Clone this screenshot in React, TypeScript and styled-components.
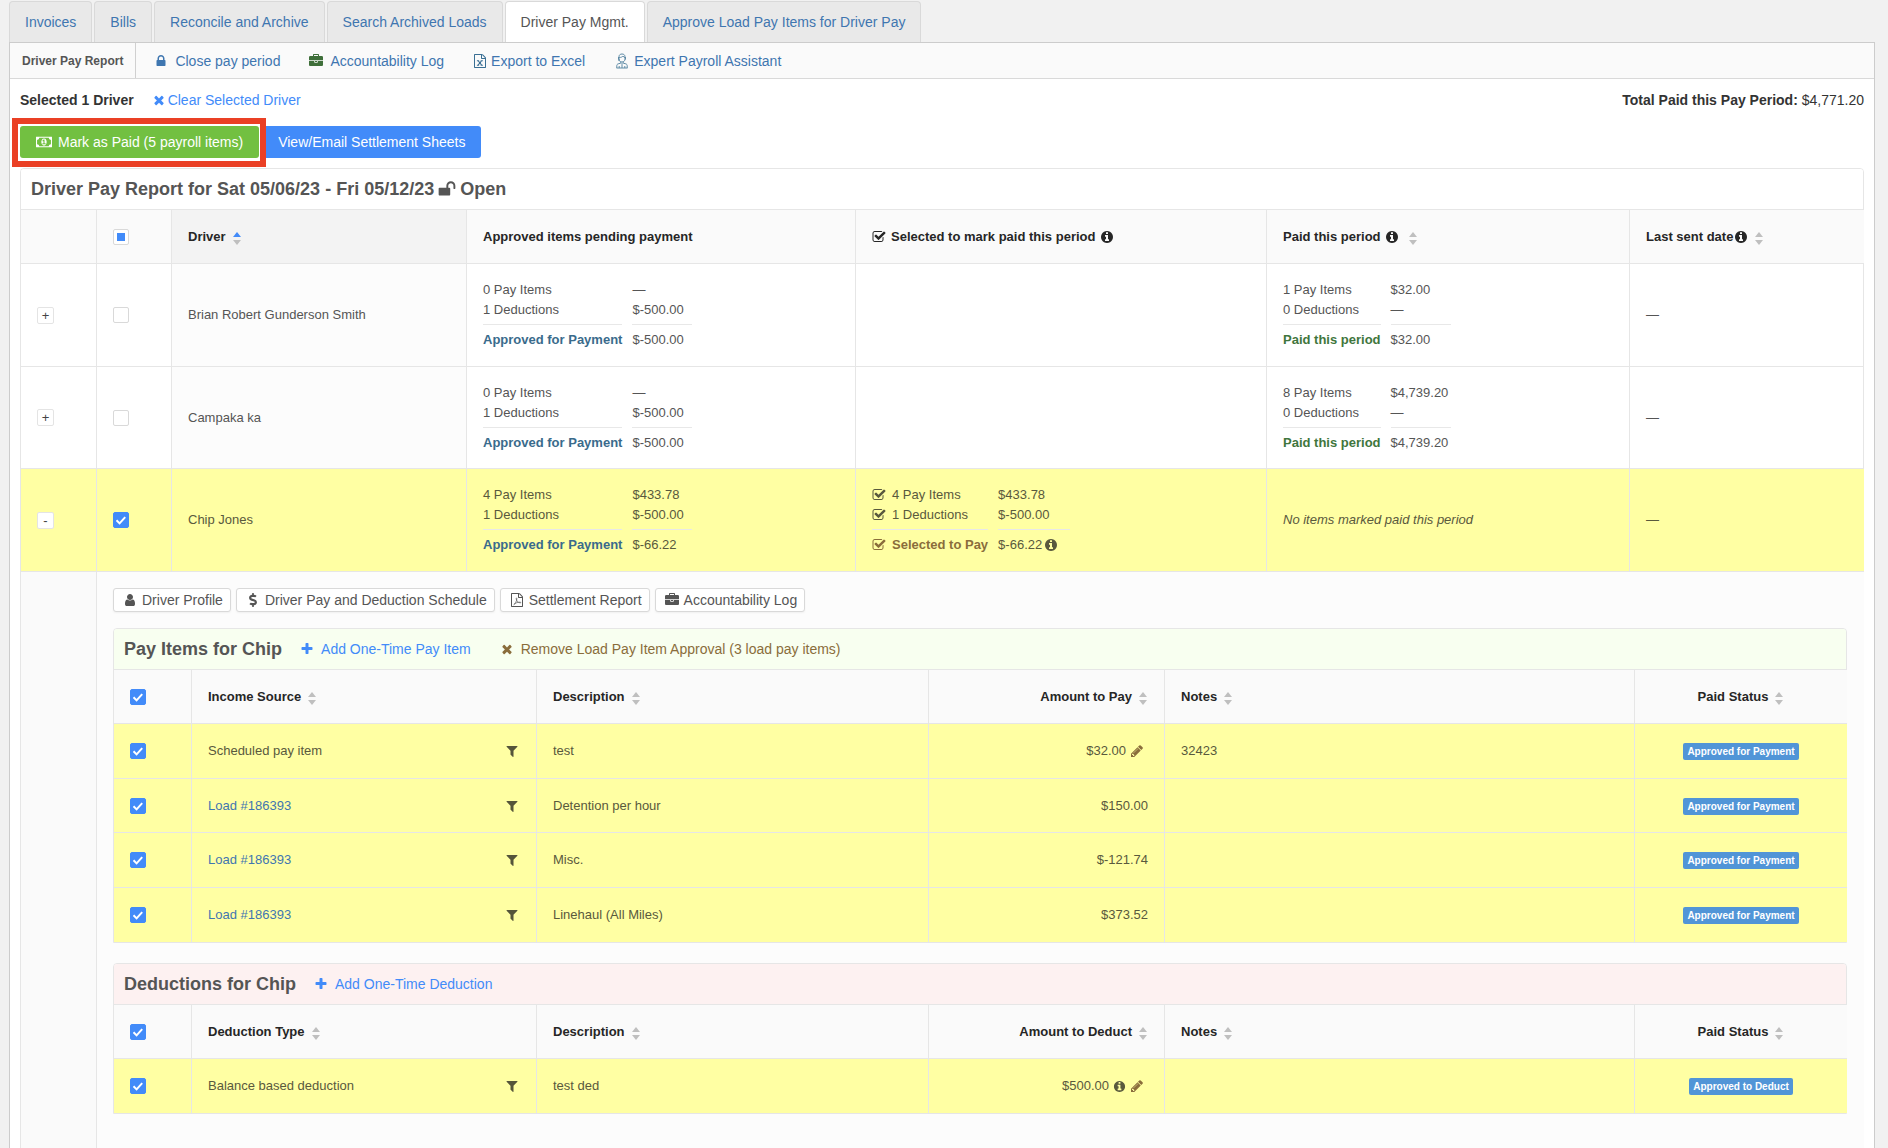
import React, { useEffect, useRef } from "react";
import styled, { createGlobalStyle, css } from "styled-components";
import { FaDollarSign } from "react-icons/fa";

const GlobalStyle = createGlobalStyle`
  * { box-sizing: border-box; }
  body {
    margin: 0;
    background: #f1f1f1;
    color: #333;
    font-family: "Liberation Sans", Arial, Helvetica, sans-serif;
    font-size: 14px;
    line-height: 20px;
  }
  button, input { font-family: inherit; }
  a { color: #3f76b0; text-decoration: none; }
`;

const blue = "#428bf9";
const line = "#e6e6e6";
const brown = "#8a6d3b";

/* ---------- icons ---------- */

const glyphs = {
  checkSquare:
    "M1472 930v318q0 119-84.5 203.5t-203.5 84.5h-832q-119 0-203.5-84.5t-84.5-203.5v-832q0-119 84.5-203.5t203.5-84.5h832q63 0 117 25 15 7 18 23 3 17-9 29l-49 49q-10 10-23 10-3 0-9-2-23-6-45-6h-832q-66 0-113 47t-47 113v832q0 66 47 113t113 47h832q66 0 113-47t47-113v-254q0-13 9-22l64-64q10-10 23-10 6 0 12 3 20 8 20 29zm231-489l-814 814q-24 24-57 24t-57-24l-430-430q-24-24-24-57t24-57l110-110q24-24 57-24t57 24l263 263 647-647q24-24 57-24t57 24l110 110q24 24 24 57t-24 57z",
  info: "M1152 1376v-160q0-14-9-23t-23-9h-96v-512q0-14-9-23t-23-9h-320q-14 0-23 9t-9 23v160q0 14 9 23t23 9h96v320h-96q-14 0-23 9t-9 23v160q0 14 9 23t23 9h448q14 0 23-9t9-23zm-128-896v-160q0-14-9-23t-23-9h-192q-14 0-23 9t-9 23v160q0 14 9 23t23 9h192q14 0 23-9t9-23zm640 416q0 209-103 385.5t-279.5 279.5-385.5 103-385.5-103-279.5-279.5-103-385.5 103-385.5 279.5-279.5 385.5-103 385.5 103 279.5 279.5 103 385.5z",
  lock: "M640 768h512v-192q0-106-75-181t-181-75-181 75-75 181v192zm832 96v576q0 40-28 68t-68 28h-960q-40 0-68-28t-28-68v-576q0-40 28-68t68-28h32v-192q0-184 132-316t316-132 316 132 132 316v192h32q40 0 68 28t28 68z",
  unlock:
    "M1728 576v256q0 26-19 45t-45 19h-64q-26 0-45-19t-19-45v-256q0-106-75-181t-181-75-181 75-75 181v192h96q40 0 68 28t28 68v576q0 40-28 68t-68 28h-960q-40 0-68-28t-28-68v-576q0-40 28-68t68-28h672v-192q0-185 131.5-316.5t316.5-131.5 316.5 131.5 131.5 316.5z",
  briefcase:
    "M640 256h512v-128h-512v128zm1152 640v480q0 66-47 113t-113 47h-1472q-66 0-113-47t-47-113v-480h672v160q0 26 19 45t45 19h320q26 0 45-19t19-45v-160h672zm-768 0v128h-256v-128h256zm768-480v384h-1792v-384q0-66 47-113t113-47h352v-160q0-40 28-68t68-28h576q40 0 68 28t28 68v160h352q66 0 113 47t47 113z",
  times:
    "M1490 1322q0 40-28 68l-136 136q-28 28-68 28t-68-28l-294-294-294 294q-28 28-68 28t-68-28l-136-136q-28-28-28-68t28-68l294-294-294-294q-28-28-28-68t28-68l136-136q28-28 68-28t68 28l294 294 294-294q28-28 68-28t68 28l136 136q28 28 28 68t-28 68l-294 294 294 294q28 28 28 68z",
  plus: "M1600 736v192q0 40-28 68t-68 28h-416v416q0 40-28 68t-68 28h-192q-40 0-68-28t-28-68v-416h-416q-40 0-68-28t-28-68v-192q0-40 28-68t68-28h416v-416q0-40 28-68t68-28h192q40 0 68 28t28 68v416h416q40 0 68 28t28 68z",
  filter:
    "M1595 295q17 41-14 70l-493 493v742q0 42-39 59-13 5-25 5-27 0-45-19l-256-256q-19-19-19-45v-486l-493-493q-31-29-14-70 17-39 59-39h1280q42 0 59 39z",
  user: "M1536 1399q0 109-62.5 187t-150.5 78h-854q-88 0-150.5-78t-62.5-187q0-85 8.5-160.5t31.5-152 58.5-131 94-89 134.5-34.5q131 128 313 128t313-128q76 0 134.5 34.5t94 89 58.5 131 31.5 152 8.5 160.5zm-256-887q0 159-112.5 271.5t-271.5 112.5-271.5-112.5-112.5-271.5 112.5-271.5 271.5-112.5 271.5 112.5 112.5 271.5z",
  pencil:
    "M491 1536l91-91-235-235-91 91v107h128v128h107zm523-928q0-22-22-22-10 0-17 7l-542 542q-7 7-7 17 0 22 22 22 10 0 17-7l542-542q7-7 7-17zm-54-192l416 416-832 832h-416v-416zm683 96q0 53-37 90l-166 166-416-416 166-165q36-38 90-38 53 0 91 38l235 234q37 39 37 91z",
  money:
    "M704 1152h384v-96h-128v-448h-114l-148 137 77 80q42-37 55-57h2v288h-128v96zm512-256q0 70-21 142t-59.5 134-101.5 101-138 39-138-39-101.5-101-59.5-134-21-142 21-142 59.5-134 101.5-101 138-39 138 39 101.5 101 59.5 134 21 142zm512 256v-512q-106 0-181-75t-75-181h-1152q0 106-75 181t-181 75v512q106 0 181 75t75 181h1152q0-106 75-181t181-75zm128-832v1152q0 26-19 45t-45 19h-1792q-26 0-45-19t-19-45v-1152q0-26 19-45t45-19h1792q26 0 45 19t19 45z",
};

const filePage =
  "M1596 380q28 28 48 76t20 88v1152q0 40-28 68t-68 28h-1344q-40 0-68-28t-28-68v-1600q0-40 28-68t68-28h896q40 0 88 20t76 48zm-444-244v376h376q-10-29-22-41l-313-313q-12-12-41-22zm384 1528v-1024h-416q-40 0-68-28t-28-68v-416h-768v1536h1280z";

const Svg = styled.svg<{ $size: number; $color?: string }>`
  flex: none;
  width: ${(p) => p.$size}px;
  height: ${(p) => p.$size}px;
  color: ${(p) => p.$color || "inherit"};
  fill: currentColor;
  vertical-align: middle;
`;

function Icon({ name, size = 14, color }: { name: keyof typeof glyphs; size?: number; color?: string }) {
  return (
    <Svg $size={size} $color={color} viewBox={name === "money" ? "-64 0 1920 1792" : "0 0 1792 1792"} aria-hidden="true">
      <path d={glyphs[name]} />
    </Svg>
  );
}

function ExcelIcon() {
  return (
    <Svg $size={14} $color="#3a6f94" viewBox="0 0 1792 1792" aria-hidden="true">
      <path d={filePage} />
      <path
        d="M500 850h280M980 850h280M500 1440h280M980 1440h280M650 850L1110 1430M1110 850L650 1430"
        fill="none"
        stroke="currentColor"
        strokeWidth="130"
      />
    </Svg>
  );
}

function PdfIcon() {
  return (
    <Svg $size={14} viewBox="0 0 1792 1792" aria-hidden="true">
      <path d={filePage} />
      <path
        d="M480 1490c160-60 400-470 400-790 0-90-90-90-90 0 0 260 220 560 520 560 130 0 110-90-30-90-260 0-640 110-800 320z"
        fill="none"
        stroke="currentColor"
        strokeWidth="85"
      />
    </Svg>
  );
}

function AssistantIcon() {
  return (
    <Svg $size={16} $color="#5f8ba6" viewBox="-2 0 16 16" aria-hidden="true">
      <g fill="none" stroke="currentColor" strokeWidth="1">
        <path d="M3 8V3.8C3 2 4.2 1 6 1s3 1 3 2.8V6c0 1.8-1.2 3-3 3S3 8 3 6M2.5 4v2.5M9.5 4v2.5M3.2 4.5C5 4.5 6.2 4 7 3c.4.8 1 1.3 2 1.5" />
        <path d="M4.8 8.8v1.4L6 11.500l1.200-1.300V8.800M.8 15v-2.500c0-1.300 1.200-1.800 3.600-2.200M11.200 15v-2.500c0-1.300-1.200-1.800-3.600-2.200M.5 15h11M3.200 15v-2M8.800 15v-2M6 12v3" />
      </g>
    </Svg>
  );
}

/* ---------- page frame ---------- */

const Page = styled.div`
  height: 100vh;
  overflow: hidden;
  padding: 1px 13px 0 9px;
`;

const Tabs = styled.nav`
  display: flex;
  gap: 2px;
`;

const Tab = styled.a<{ $active?: boolean }>`
  height: 41px;
  padding: 10px 15px;
  border: 1px solid #d9d9d9;
  border-bottom: 0;
  border-radius: 4px 4px 0 0;
  background: ${(p) => (p.$active ? "#fff" : "#e9e9e9")};
  ${(p) => p.$active && css`color: #555;`}
`;

const Frame = styled.main`
  min-height: 100vh;
  border: 1px solid #ccc;
  background: #fff;
`;

const Toolbar = styled.div`
  display: flex;
  align-items: stretch;
  height: 36px;
  border-bottom: 1px solid #d9d9d9;
  background: #fafafa;
`;

const ToolbarTitle = styled.strong`
  display: flex;
  align-items: center;
  padding: 0 12px;
  border-right: 1px solid #d0d0d0;
  color: #555;
  font-size: 12px;
`;

const ToolbarLinks = styled.div`
  display: flex;
  align-items: center;
  gap: 29px;
  padding-left: 18px;
`;

const IconLink = styled.a<{ $color?: string; $gap?: number }>`
  display: inline-flex;
  align-items: center;
  gap: ${(p) => p.$gap || 7}px;
  ${(p) => p.$color && css`color: ${p.$color};`}
`;

const Content = styled.div`
  padding: 11px 10px 0;
`;

const Summary = styled.div`
  display: flex;
  align-items: center;
  gap: 18px;
`;

const Total = styled.span`
  margin-left: auto;
`;

const Actions = styled.div`
  display: flex;
  gap: 3px;
  padding: 16px 0 10px;
`;

const ActionButton = styled.button<{ $bg: string }>`
  display: flex;
  align-items: center;
  gap: 6px;
  height: 32px;
  padding: 0 16px;
  border: 0;
  border-radius: 3px;
  background: ${(p) => p.$bg};
  color: #fff;
  font-size: 14px;
`;

const Marked = styled.div`
  position: relative;
  &::after {
    content: "";
    position: absolute;
    inset: -8px -7px -9px -8px;
    border: 6px solid #ea4025;
    pointer-events: none;
  }
`;

/* ---------- cards and tables ---------- */

const Card = styled.section`
  border: 1px solid ${line};
  border-radius: 4px 4px 0 0;
  & + & { margin-top: 20px; }
`;

const CardHead = styled.header<{ $bg?: string }>`
  display: flex;
  align-items: center;
  height: 41px;
  padding: 0 10px;
  gap: 18px;
  border-bottom: 1px solid ${line};
  border-radius: 3px 3px 0 0;
  background: ${(p) => p.$bg || "#fff"};
`;

const HeadLinks = styled.div`
  display: flex;
  gap: 29px;
`;

const Title = styled.h2`
  display: flex;
  align-items: center;
  gap: 4px;
  margin: 0;
  color: #555;
  font-size: 18px;
  font-weight: 700;
`;

const Table = styled.table`
  width: 100%;
  table-layout: fixed;
  border-collapse: separate;
  border-spacing: 0;
  font-size: 13px;
  color: #555;
`;

const Col = styled.col<{ $w: number }>`
  width: ${(p) => p.$w}px;
`;

type Align = "left" | "right" | "center";

const Th = styled.th<{ $align?: Align; $sorted?: boolean }>`
  height: 54px;
  padding: 0 16px;
  border-right: 1px solid ${line};
  border-bottom: 1px solid ${line};
  background: ${(p) => (p.$sorted ? "#f3f3f3" : "#fafafa")};
  color: #262626;
  text-align: ${(p) => p.$align || "left"};
  font-weight: 700;
  &:last-child { border-right: 0; }
`;

const Td = styled.td<{ $align?: Align; $bg?: string }>`
  padding: 0 16px;
  border-right: 1px solid ${line};
  border-bottom: 1px solid ${line};
  background: ${(p) => p.$bg || "transparent"};
  text-align: ${(p) => p.$align || "left"};
  &:last-child { border-right: 0; }
`;

const DriverRow = styled.tr<{ $selected?: boolean }>`
  height: 103px;
  &:nth-child(even) { height: 102px; }
  ${(p) => p.$selected && css`background: #ffffa3; color: #59593d;`}
`;

const ItemRow = styled.tr`
  height: 55px;
  background: #ffffa3;
  color: #59593d;
  &:nth-child(even), &:last-child { height: 54px; }
  &:last-child td { border-bottom: 0; }
`;

const SorterBox = styled.span`
  display: inline-flex;
  flex-direction: column;
  gap: 3px;
  margin: 3px 1px 0 3px;
`;

const HeadLabel = styled.span<{ $gap?: number }>`
  display: inline-flex;
  align-items: center;
  gap: ${(p) => p.$gap || 4}px;
  height: 20px;
  vertical-align: middle;
  svg + ${SorterBox} { margin-left: 6px; }
`;

const Caret = styled.i<{ $down?: boolean; $on?: boolean }>`
  border: 4px solid transparent;
  border-top-width: ${(p) => (p.$down ? 5 : 0)}px;
  border-bottom-width: ${(p) => (p.$down ? 0 : 5)}px;
  ${(p) =>
    p.$down
      ? css`border-top-color: #bfbfbf;`
      : css`border-bottom-color: ${p.$on ? blue : "#bfbfbf"};`}
`;

function Sorter({ on }: { on?: boolean }) {
  return (
    <SorterBox>
      <Caret $on={on} />
      <Caret $down />
    </SorterBox>
  );
}

const Box = styled.input`
  appearance: none;
  display: block;
  width: 16px;
  height: 16px;
  margin: 0;
  border: 1px solid #d9d9d9;
  border-radius: 2px;
  background: #fff center / 16px 16px no-repeat;
  &:checked {
    border-color: ${blue};
    background-color: ${blue};
    background-image: url("data:image/svg+xml,%3Csvg xmlns='http://www.w3.org/2000/svg' viewBox='0 0 16 16'%3E%3Cpath d='M3.5 8.2l3.1 3.2 5.6-6.2' fill='none' stroke='white' stroke-width='2'/%3E%3C/svg%3E");
  }
  &:indeterminate {
    background-image: linear-gradient(${blue}, ${blue});
    background-size: 8px 8px;
  }
`;

function Check({ label, checked, partial }: { label: string; checked?: boolean; partial?: boolean }) {
  const ref = useRef<HTMLInputElement>(null);
  useEffect(() => {
    if (ref.current) ref.current.indeterminate = !!partial;
  }, [partial]);
  return <Box ref={ref} type="checkbox" aria-label={label} defaultChecked={checked} />;
}

const Toggle = styled.button`
  display: flex;
  align-items: center;
  justify-content: center;
  width: 17px;
  height: 17px;
  padding: 0;
  border: 1px solid #e4e4e4;
  border-radius: 2px;
  background: #fff;
  color: #444;
  font-size: 13px;
  line-height: 15px;
`;

const Sums = styled.dl<{ $min: number }>`
  display: inline-grid;
  grid-template-columns: auto minmax(${(p) => p.$min}px, auto);
  column-gap: 10px;
  margin: 0;
  vertical-align: middle;
  line-height: 20px;
`;

const SumLabel = styled.dt<{ $total?: string }>`
  display: flex;
  align-items: center;
  gap: 6px;
  ${(p) =>
    p.$total &&
    css`
      margin-top: 4px;
      padding-top: 5px;
      border-top: 1px solid #e8e8e8;
      color: ${p.$total};
      font-weight: 700;
    `}
`;

const SumValue = styled.dd<{ $total?: boolean }>`
  display: flex;
  align-items: center;
  gap: 2px;
  margin: 0;
  ${(p) => p.$total && css`margin-top: 4px; padding-top: 5px; border-top: 1px solid #e8e8e8;`}
`;

interface SumData {
  pay: [string, string];
  ded: [string, string];
  total: string;
}

function SumsCell({ data, label, color, ticks }: { data: SumData; label: string; color: string; ticks?: boolean }) {
  const tick = ticks ? <Icon name="checkSquare" /> : null;
  return (
    <Sums $min={ticks ? 72 : 60}>
      <SumLabel>{tick}{data.pay[0]} Pay Items</SumLabel>
      <SumValue>{data.pay[1]}</SumValue>
      <SumLabel>{tick}{data.ded[0]} Deductions</SumLabel>
      <SumValue>{data.ded[1]}</SumValue>
      <SumLabel $total={color}>{tick}{label}</SumLabel>
      <SumValue $total>{data.total}{ticks && <Icon name="info" />}</SumValue>
    </Sums>
  );
}

interface Driver {
  name: string;
  approved: SumData;
  selected?: SumData;
  paid?: SumData;
}

const drivers: Driver[] = [
  {
    name: "Brian Robert Gunderson Smith",
    approved: { pay: ["0", "—"], ded: ["1", "$-500.00"], total: "$-500.00" },
    paid: { pay: ["1", "$32.00"], ded: ["0", "—"], total: "$32.00" },
  },
  {
    name: "Campaka ka",
    approved: { pay: ["0", "—"], ded: ["1", "$-500.00"], total: "$-500.00" },
    paid: { pay: ["8", "$4,739.20"], ded: ["0", "—"], total: "$4,739.20" },
  },
  {
    name: "Chip Jones",
    approved: { pay: ["4", "$433.78"], ded: ["1", "$-500.00"], total: "$-66.22" },
    selected: { pay: ["4", "$433.78"], ded: ["1", "$-500.00"], total: "$-66.22" },
  },
];

/* ---------- driver detail ---------- */

const DetailGutter = styled.td`
  border-right: 1px solid ${line};
  background: #fafafa;
`;

const Detail = styled.td`
  height: 640px;
  padding: 16px 17px 0 16px;
  background: #fcfcfc;
  vertical-align: top;
  font-size: 14px;
`;

const ButtonRow = styled.div`
  display: flex;
  gap: 5px;
  margin-bottom: 16px;
`;

const SmallButton = styled.button`
  display: flex;
  align-items: center;
  gap: 5px;
  height: 24px;
  padding: 0 7px 0 9px;
  border: 1px solid #d9d9d9;
  border-radius: 3px;
  background: #fff;
  box-shadow: 0 1px 2px rgba(0, 0, 0, 0.05);
  color: #555;
  font-size: 14px;
`;

const Split = styled.div`
  display: flex;
  align-items: center;
  justify-content: space-between;
`;

const Amount = styled.span`
  display: inline-flex;
  align-items: center;
  gap: 4px;
`;

const EditButton = styled.button`
  display: flex;
  padding: 0 4px 0 0;
  border: 0;
  background: none;
  color: ${brown};
`;

const FilterButton = styled.button`
  display: flex;
  padding: 0 1px;
  border: 0;
  background: none;
  color: #55553a;
`;

const Badge = styled.span`
  display: inline-block;
  height: 17px;
  padding: 0 4px;
  border-radius: 2px;
  background: #5195d7;
  color: #fff;
  font-size: 10px;
  font-weight: 700;
  line-height: 17px;
  vertical-align: middle;
`;

interface Item {
  source: string;
  link?: boolean;
  description: string;
  amount: string;
  info?: boolean;
  edit?: boolean;
  notes?: string;
  status: string;
}

const payItems: Item[] = [
  { source: "Scheduled pay item", description: "test", amount: "$32.00", edit: true, notes: "32423", status: "Approved for Payment" },
  { source: "Load #186393", link: true, description: "Detention per hour", amount: "$150.00", status: "Approved for Payment" },
  { source: "Load #186393", link: true, description: "Misc.", amount: "$-121.74", status: "Approved for Payment" },
  { source: "Load #186393", link: true, description: "Linehaul (All Miles)", amount: "$373.52", status: "Approved for Payment" },
];

const deductions: Item[] = [
  { source: "Balance based deduction", description: "test ded", amount: "$500.00", info: true, edit: true, status: "Approved to Deduct" },
];

function ItemTable({ first, amount, items }: { first: string; amount: string; items: Item[] }) {
  const heads: [string, Align][] = [
    [first, "left"],
    ["Description", "left"],
    [amount, "right"],
    ["Notes", "left"],
    ["Paid Status", "center"],
  ];
  return (
    <Table>
      <colgroup>
        {[78, 345, 392, 236, 470, 212].map((w) => <Col key={w} $w={w} />)}
      </colgroup>
      <thead>
        <tr>
          <Th><Check label="Select all" checked /></Th>
          {heads.map(([text, align]) => (
            <Th key={text} $align={align}>
              <HeadLabel>{text}<Sorter /></HeadLabel>
            </Th>
          ))}
        </tr>
      </thead>
      <tbody>
        {items.map((it, i) => (
          <ItemRow key={i}>
            <Td><Check label={`Select ${it.description}`} checked /></Td>
            <Td>
              <Split>
                {it.link ? <a href="#load">{it.source}</a> : it.source}
                <FilterButton aria-label="Filter"><Icon name="filter" /></FilterButton>
              </Split>
            </Td>
            <Td>{it.description}</Td>
            <Td $align="right">
              <Amount>
                {it.amount}
                {it.info && <Icon name="info" size={13} />}
                {it.edit && <EditButton aria-label="Edit"><Icon name="pencil" /></EditButton>}
              </Amount>
            </Td>
            <Td>{it.notes}</Td>
            <Td $align="center"><Badge>{it.status}</Badge></Td>
          </ItemRow>
        ))}
      </tbody>
    </Table>
  );
}

export default function App() {
  return (
    <Page>
      <GlobalStyle />
      <Tabs>
        <Tab href="#invoices">Invoices</Tab>
        <Tab href="#bills">Bills</Tab>
        <Tab href="#reconcile">Reconcile and Archive</Tab>
        <Tab href="#search">Search Archived Loads</Tab>
        <Tab href="#driver-pay" $active>Driver Pay Mgmt.</Tab>
        <Tab href="#approve">Approve Load Pay Items for Driver Pay</Tab>
      </Tabs>
      <Frame>
        <Toolbar>
          <ToolbarTitle>Driver Pay Report</ToolbarTitle>
          <ToolbarLinks>
            <IconLink href="#close"><Icon name="lock" />Close pay period</IconLink>
            <IconLink href="#log"><Icon name="briefcase" color="#3f6f3a" />Accountability Log</IconLink>
            <IconLink href="#excel" $gap={4}><ExcelIcon />Export to Excel</IconLink>
            <IconLink href="#assistant" $gap={4}><AssistantIcon />Expert Payroll Assistant</IconLink>
          </ToolbarLinks>
        </Toolbar>
        <Content>
          <Summary>
            <strong>Selected 1 Driver</strong>
            <IconLink href="#clear" $color={blue} $gap={2}><Icon name="times" />Clear Selected Driver</IconLink>
            <Total><strong>Total Paid this Pay Period:</strong> $4,771.20</Total>
          </Summary>
          <Actions>
            <Marked>
              <ActionButton $bg="#72c041"><Icon name="money" size={16} />Mark as Paid (5 payroll items)</ActionButton>
            </Marked>
            <ActionButton $bg={blue}>View/Email Settlement Sheets</ActionButton>
          </Actions>
          <Card>
            <CardHead>
              <Title>Driver Pay Report for Sat 05/06/23 - Fri 05/12/23 <Icon name="unlock" size={18} />Open</Title>
            </CardHead>
            <Table>
              <colgroup>
                {[76, 75, 295, 389, 411, 363, 234].map((w) => <Col key={w} $w={w} />)}
              </colgroup>
              <thead>
                <tr>
                  <Th />
                  <Th><Check label="Select all drivers" partial /></Th>
                  <Th $sorted><HeadLabel>Driver<Sorter on /></HeadLabel></Th>
                  <Th>Approved items pending payment</Th>
                  <Th>
                    <HeadLabel $gap={5}><Icon name="checkSquare" />Selected to mark paid this period<Icon name="info" /></HeadLabel>
                  </Th>
                  <Th><HeadLabel>Paid this period<Icon name="info" /><Sorter /></HeadLabel></Th>
                  <Th><HeadLabel $gap={1}>Last sent date<Icon name="info" /><Sorter /></HeadLabel></Th>
                </tr>
              </thead>
              <tbody>
                {drivers.map((d) => (
                  <DriverRow key={d.name} $selected={!!d.selected}>
                    <Td><Toggle aria-label={`Toggle ${d.name}`}>{d.selected ? "-" : "+"}</Toggle></Td>
                    <Td><Check label={`Select ${d.name}`} checked={!!d.selected} /></Td>
                    <Td $bg={d.selected ? undefined : "#fcfcfc"}>{d.name}</Td>
                    <Td><SumsCell data={d.approved} label="Approved for Payment" color="#3a6b8c" /></Td>
                    <Td>{d.selected && <SumsCell data={d.selected} label="Selected to Pay" color={brown} ticks />}</Td>
                    <Td>
                      {d.paid ? <SumsCell data={d.paid} label="Paid this period" color="#3f763d" /> : <em>No items marked paid this period</em>}
                    </Td>
                    <Td>—</Td>
                  </DriverRow>
                ))}
                <tr>
                  <DetailGutter />
                  <Detail colSpan={6}>
                    <ButtonRow>
                      <SmallButton><Icon name="user" />Driver Profile</SmallButton>
                      <SmallButton><FaDollarSign size={14} aria-hidden="true" />Driver Pay and Deduction Schedule</SmallButton>
                      <SmallButton><PdfIcon />Settlement Report</SmallButton>
                      <SmallButton><Icon name="briefcase" />Accountability Log</SmallButton>
                    </ButtonRow>
                    <Card>
                      <CardHead $bg="#f8fff0">
                        <Title>Pay Items for Chip</Title>
                        <HeadLinks>
                          <IconLink href="#add-pay" $color={blue}><Icon name="plus" />Add One-Time Pay Item</IconLink>
                          <IconLink href="#remove" $color={brown}><Icon name="times" />Remove Load Pay Item Approval (3 load pay items)</IconLink>
                        </HeadLinks>
                      </CardHead>
                      <ItemTable first="Income Source" amount="Amount to Pay" items={payItems} />
                    </Card>
                    <Card>
                      <CardHead $bg="#fdf1f1">
                        <Title>Deductions for Chip</Title>
                        <HeadLinks>
                          <IconLink href="#add-deduction" $color={blue}><Icon name="plus" />Add One-Time Deduction</IconLink>
                        </HeadLinks>
                      </CardHead>
                      <ItemTable first="Deduction Type" amount="Amount to Deduct" items={deductions} />
                    </Card>
                  </Detail>
                </tr>
              </tbody>
            </Table>
          </Card>
        </Content>
      </Frame>
    </Page>
  );
}
